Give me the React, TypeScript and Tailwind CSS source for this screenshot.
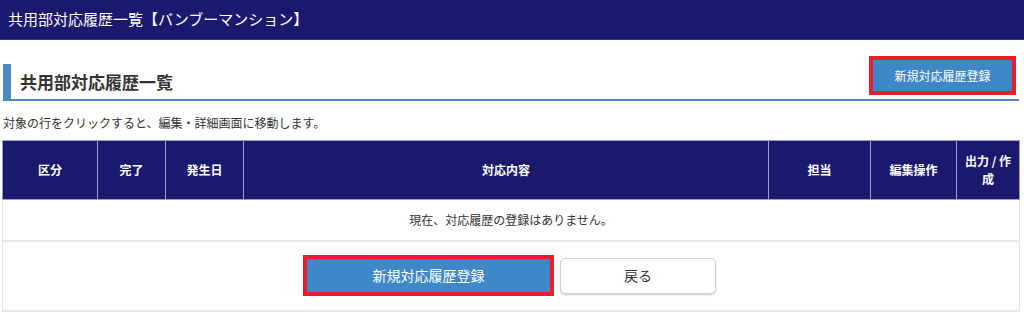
import React from "react";

const font = { fontFamily: '"Noto Sans CJK JP", "Noto Sans", sans-serif' };

export default function App() {
  const cols = [
    { label: "区分", w: 95 },
    { label: "完了", w: 68 },
    { label: "発生日", w: 78 },
    { label: "対応内容", w: 525 },
    { label: "担当", w: 102 },
    { label: "編集操作", w: 86 },
    { label: "出力 / 作成", w: 63 },
  ];
  return (
    <div className="w-[1024px] h-[329px] bg-white text-[#333]" style={font}>
      <div className="h-[40px] bg-[#1b196e] border-b border-[#3a3a88] flex items-center px-[8px] text-white text-[15px]">
        共用部対応履歴一覧【バンブーマンション】
      </div>
      <div className="px-[3px] pr-[5px]">
        <div className="mt-[16px] flex items-end justify-between border-b-2 border-[#4d88c2]">
          <div className="h-[35px] border-l-[8px] border-[#4d88c2] pl-[9px] flex items-center text-[17px] font-bold text-[#333]">
            共用部対応履歴一覧
          </div>
          <div className="mb-[4px] mr-[3px] border-4 border-[#e81f2b]">
            <button className="w-[139px] h-[31px] bg-[#3f88c8] text-white text-[12px] flex items-center justify-center">
              新規対応履歴登録
            </button>
          </div>
        </div>
        <div className="mt-[13px] text-[12px] leading-[18px]">
          対象の行をクリックすると、編集・詳細画面に移動します。
        </div>
        <table className="mt-[8px] -ml-[1px] border-collapse table-fixed w-[1017px] border border-[#e3e3e3]">
          <colgroup>
            {cols.map((c) => (
              <col key={c.label} style={{ width: c.w }} />
            ))}
          </colgroup>
          <thead>
            <tr className="h-[59px] bg-[#1b196e]">
              {cols.map((c) => (
                <th
                  key={c.label}
                  className="border border-[#a09ec9] text-white text-[12px] font-bold leading-[18px] px-[4px]"
                >
                  {c.label}
                </th>
              ))}
            </tr>
          </thead>
          <tbody>
            <tr className="h-[41px]">
              <td colSpan={7} className="border-b-2 border-[#e8e8e8] text-center text-[12px]">
                現在、対応履歴の登録はありません。
              </td>
            </tr>
            <tr className="h-[70px]">
              <td colSpan={7} className="border-b-2 border-[#e8e8e8]">
                <div className="flex items-center justify-center gap-[6px] pr-[3px]">
                  <div className="border-4 border-[#e81f2b]">
                    <button className="w-[243px] h-[33px] bg-[#3f88c8] text-white text-[14px] flex items-center justify-center">
                      新規対応履歴登録
                    </button>
                  </div>
                  <button className="w-[156px] h-[36px] bg-white border border-[#d0d0d0] rounded-[5px] shadow-[0_1px_2px_rgba(0,0,0,0.2)] text-[14px] text-[#333] flex items-center justify-center">
                    戻る
                  </button>
                </div>
              </td>
            </tr>
          </tbody>
        </table>
      </div>
    </div>
  );
}
